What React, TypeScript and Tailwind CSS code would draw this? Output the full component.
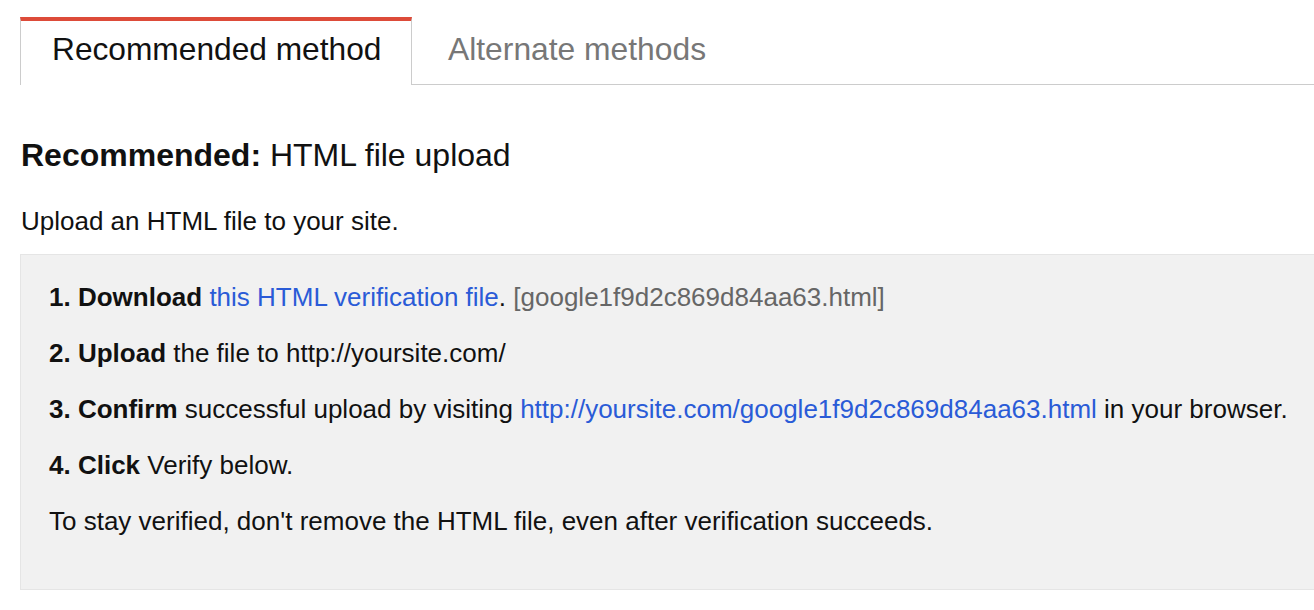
import React from 'react';

const steps: { n: string; verb: string; rest: React.ReactNode }[] = [
  {
    n: '1.',
    verb: 'Download',
    rest: (
      <>
        {' '}
        <a className="text-[#2a5bd7]">this HTML verification file</a>.{' '}
        <span className="text-[#666666]">[google1f9d2c869d84aa63.html]</span>
      </>
    ),
  },
  { n: '2.', verb: 'Upload', rest: ' the file to http://yoursite.com/' },
  {
    n: '3.',
    verb: 'Confirm',
    rest: (
      <>
        {' '}successful upload by visiting{' '}
        <a className="text-[#2a5bd7]">http://yoursite.com/google1f9d2c869d84aa63.html</a> in your browser.
      </>
    ),
  },
  { n: '4.', verb: 'Click', rest: ' Verify below.' },
];

export default function App() {
  return (
    <div className="w-[1314px] h-[610px] overflow-hidden bg-white text-[#111] font-['Liberation_Sans',Arial,sans-serif]">
      {/* Tabs */}
      <div className="flex pt-[17px]">
        <div className="w-5 shrink-0" />
        <div className="w-[392px] h-[68px] shrink-0 border-t-[4px] border-t-[#dd4b39] border-x border-x-[#cccccc] bg-white pl-[31px] pt-[10px] text-[31.7px] leading-[36px] text-[#111] whitespace-nowrap">
          Recommended method
        </div>
        <div className="flex-1 h-[68px] border-b border-b-[#cccccc] pl-[36px] pt-[14px] text-[31.8px] leading-[36px] text-[#777777] whitespace-nowrap">
          Alternate methods
        </div>
      </div>

      {/* Heading */}
      <div className="pl-[21px] pt-[52px] text-[32px] leading-[36px]">
        <span className="font-bold">Recommended:</span> HTML file upload
      </div>

      <div className="pl-[21px] pt-[34px] text-[26px] leading-[28px]">Upload an HTML file to your site.</div>

      {/* Instructions box */}
      <div className="ml-5 mt-[19px] w-[1310px] h-[336px] bg-[#f1f1f1] border border-[#e5e5e5] pl-[28px] pt-[28px] text-[26px] leading-[28px] whitespace-nowrap">
        <div className="flex flex-col gap-[28px]">
          {steps.map((s) => (
            <div key={s.n}>
              <span className="font-bold">
                {s.n} {s.verb}
              </span>
              {s.rest}
            </div>
          ))}
          <div>To stay verified, don't remove the HTML file, even after verification succeeds.</div>
        </div>
      </div>
    </div>
  );
}
